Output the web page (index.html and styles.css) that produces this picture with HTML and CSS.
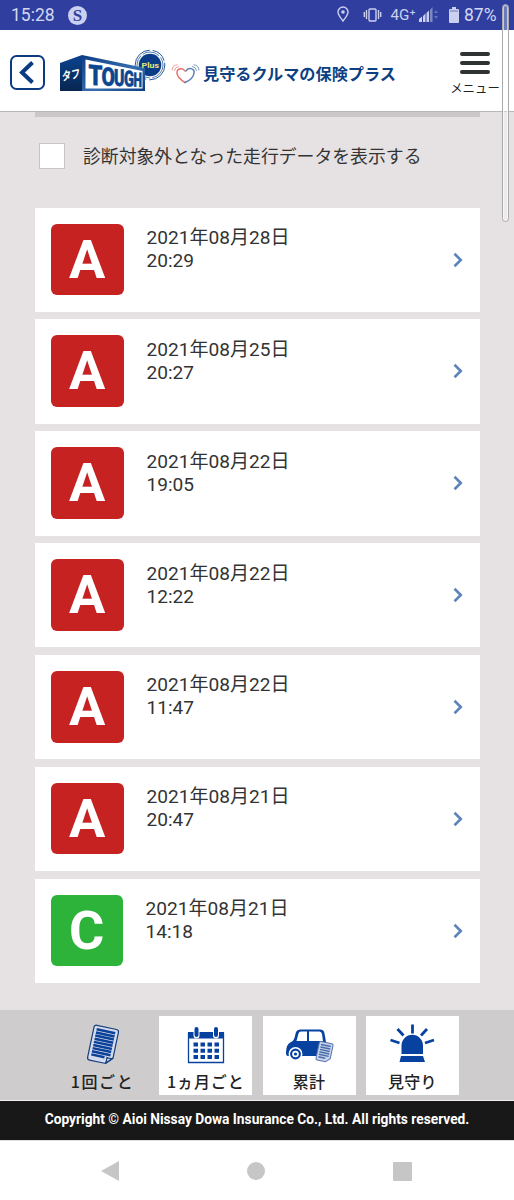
FILE: index.html
```html
<!DOCTYPE html>
<html lang="ja">
<head>
  <meta charset="UTF-8">
  <meta name="viewport" content="width=device-width, initial-scale=1.0">
  <title>見守るクルマの保険プラス</title>
  <link rel="stylesheet" href="styles.css">
</head>
<body>
  <div class="status-bar">
    <span class="clock">15:28</span>
    <span class="s-badge">S</span>
    <svg class="status-icons" width="104" height="30" viewBox="0 0 104 30">
      <g fill="none" stroke="#cbd0f0" stroke-width="1.4">
        <path d="M7 21C4 17 2 15 2 12a5 5 0 0 1 10 0c0 3-2 5-5 9z"/>
        <rect x="33" y="9" width="7" height="12" rx="1"/>
        <path d="M30.500 10v9M28.300 12v5M42.500 10v9M44.700 12v5"/>
      </g>
      <circle cx="7" cy="12" r="1.800" fill="#cbd0f0"/>
      <text x="54.500" y="19.500" textLength="25" lengthAdjust="spacingAndGlyphs">4G⁺</text>
      <g fill="#cbd0f0">
        <path d="M83 22v-3l3-2.500V22zM87 22v-6l2.500-2.500V22z"/>
        <path d="M90.500 22v-9l2.500-2.500V22z"/>
        <path d="M94 22V10l2.500-3v15z" opacity=".5"/>
        <path d="M98 13l2-3 2 3zM98 16l2 3 2-3z" opacity=".35"/>
      </g>
    </svg>
    <svg class="battery" width="10" height="16" viewBox="0 0 10 16">
      <path d="M3 0h4v2h2q1 0 1 1v12q0 1-1 1H1q-1 0-1-1V3q0-1 1-1h2z" fill="#cbd0f0"/>
      <path d="M1 4h8" stroke="#303f9f" stroke-width="1" opacity=".6"/>
    </svg>
    <span class="percent">87%</span>
  </div>

  <header class="header">
    <a class="back" href="#">
      <svg width="35" height="35" viewBox="0 0 35 35">
        <rect x="1" y="1" width="33" height="33" rx="5.500" fill="#fff" stroke="#0d3b82" stroke-width="2"/>
        <path d="M22.500 7.500L12 17.500 22.500 27.500" fill="none" stroke="#0d3b82" stroke-width="4"/>
      </svg>
    </a>
    <svg class="logo" width="110" height="46" viewBox="0 0 110 46">
      <defs>
        <linearGradient id="side" x1="0" y1="0" x2="0" y2="1">
          <stop offset="0" stop-color="#0b4391"/>
          <stop offset="1" stop-color="#08264f"/>
        </linearGradient>
        <linearGradient id="front" x1="0" y1="0" x2="1" y2="1">
          <stop offset="0" stop-color="#0d3d85"/>
          <stop offset=".6" stop-color="#356eb0"/>
          <stop offset="1" stop-color="#0b3a80"/>
        </linearGradient>
      </defs>
      <g fill="none" stroke="#0d4690">
        <circle cx="92" cy="17" r="14.800" stroke-width=".9" stroke-dasharray="24 3 16 2"/>
        <circle cx="92" cy="17" r="13" stroke-width=".7" stroke-dasharray="18 2 31 2"/>
      </g>
      <circle cx="92" cy="17" r="11.300" fill="#0b3d87"/>
      <path d="M2 15L24 7v36H2z" fill="url(#side)"/>
      <path d="M24 7l63 13v23H24z" fill="url(#front)"/>
      <path d="M27.500 11.500l57 11.500v17.500h-57z" fill="#fff"/>
      <text class="logo-kana" transform="matrix(1 -.2 0 1 4 33)" textLength="18" lengthAdjust="spacingAndGlyphs">タフ</text>
      <g class="logo-word">
        <text transform="matrix(1 .08 0 1 30.500 36.500)" font-size="28" textLength="14" lengthAdjust="spacingAndGlyphs">T</text>
        <text transform="matrix(1 .06 0 1 43.500 37.200)" font-size="25.500" textLength="13.500" lengthAdjust="spacingAndGlyphs">O</text>
        <text transform="matrix(1 .03 0 1 56 37.800)" font-size="23.500" textLength="10.500" lengthAdjust="spacingAndGlyphs">U</text>
        <text transform="matrix(1 .03 0 1 66 38.300)" font-size="22" textLength="10" lengthAdjust="spacingAndGlyphs">G</text>
        <text transform="matrix(1 .03 0 1 75.500 38.700)" font-size="20" textLength="8.500" lengthAdjust="spacingAndGlyphs">H</text>
      </g>
      <text class="logo-plus" x="83.500" y="19.500" textLength="17.500" lengthAdjust="spacingAndGlyphs">Plus</text>
    </svg>
    <svg class="heart" width="29" height="20" viewBox="0 0 29 20">
      <g fill="none" stroke-linecap="round">
        <path d="M14 7C12 3.500 6 4 6 9c0 4 4 7 8 9.500" stroke="#e8706c" stroke-width="1.500"/>
        <path d="M15 7c2-4 9-3 8 2-.5 4-4 7.500-9 9.500" stroke="#5c7fb8" stroke-width="1.500"/>
        <path d="M3.500 6.500Q4 3 7.500 2.500M1 6Q1.500 1 6 .8" stroke="#eda09c" stroke-width="1"/>
        <path d="M25.500 6.500Q25 3 21.500 2.500M28 6Q27.500 1 23 .8" stroke="#7f9ac5" stroke-width="1"/>
      </g>
    </svg>
    <span class="site-name">見守るクルマの保険プラス</span>
    <div class="menu">
      <div class="bars"><i></i><i></i><i></i></div>
      <span>メニュー</span>
    </div>
  </header>

  <main class="content">
    <div class="divider"></div>
    <label class="filter">
      <span class="checkbox"></span>
      診断対象外となった走行データを表示する
    </label>

    <div class="trips">
      <a class="trip" href="#">
        <span class="grade">A</span>
        <span class="date">2021年08月28日<br>20:29</span>
        <svg class="arrow" viewBox="0 0 10 16"><path d="M1.500 1.800L7.800 8l-6.300 6.200"/></svg>
      </a>
      <a class="trip" href="#">
        <span class="grade">A</span>
        <span class="date">2021年08月25日<br>20:27</span>
        <svg class="arrow" viewBox="0 0 10 16"><path d="M1.500 1.800L7.800 8l-6.300 6.200"/></svg>
      </a>
      <a class="trip" href="#">
        <span class="grade">A</span>
        <span class="date">2021年08月22日<br>19:05</span>
        <svg class="arrow" viewBox="0 0 10 16"><path d="M1.500 1.800L7.800 8l-6.300 6.200"/></svg>
      </a>
      <a class="trip" href="#">
        <span class="grade">A</span>
        <span class="date">2021年08月22日<br>12:22</span>
        <svg class="arrow" viewBox="0 0 10 16"><path d="M1.500 1.800L7.800 8l-6.300 6.200"/></svg>
      </a>
      <a class="trip" href="#">
        <span class="grade">A</span>
        <span class="date">2021年08月22日<br>11:47</span>
        <svg class="arrow" viewBox="0 0 10 16"><path d="M1.500 1.800L7.800 8l-6.300 6.200"/></svg>
      </a>
      <a class="trip" href="#">
        <span class="grade">A</span>
        <span class="date">2021年08月21日<br>20:47</span>
        <svg class="arrow" viewBox="0 0 10 16"><path d="M1.500 1.800L7.800 8l-6.300 6.200"/></svg>
      </a>
      <a class="trip" href="#">
        <span class="grade grade-c">C</span>
        <span class="date">2021年08月21日<br>14:18</span>
        <svg class="arrow" viewBox="0 0 10 16"><path d="M1.500 1.800L7.800 8l-6.300 6.200"/></svg>
      </a>
    </div>
  </main>

  <nav class="tabs">
    <a class="tab active" href="#">
      <svg width="50" height="42" viewBox="0 0 50 42">
        <g transform="rotate(12 25 21)">
          <path d="M15 3h20q2.500 0 2.500 2.500V32L31.500 38.500H15q-2.500 0-2.500-2.500V5.500Q12.500 3 15 3z" fill="#d5dbea" stroke="#16407f" stroke-width="1.200"/>
          <path d="M15.500 7h19M15.500 10.200h19M15.500 13.400h19M15.500 16.600h19M15.500 19.800h19M15.500 23h19M15.500 26.200h19M15.500 29.400h19M15.500 32.600h13.500" stroke="#0b4199" stroke-width="2.500"/>
          <path d="M31 38.500q1-2 .5-6 3 1 6-.5z" fill="#d5dbea" stroke="#16407f" stroke-width="1.200"/>
        </g>
      </svg>
      <span>1回ごと</span>
    </a>
    <a class="tab" href="#">
      <svg width="50" height="42" viewBox="0 0 50 42">
        <path d="M7.500 9.500h35v29h-35z" fill="#fff" stroke="#0842a0" stroke-width="1.300"/>
        <path d="M7 8h36v6.500H7z" fill="#0842a0"/>
        <path d="M15.500 5v6.500M35 5v6.500" stroke="#fff" stroke-width="6" stroke-linecap="round"/>
        <path d="M15.500 5v6M35 5v6" stroke="#0842a0" stroke-width="4" stroke-linecap="round"/>
        <path d="M12.500 20.500h26M12.500 26.800h26M12.500 33h26" stroke="#0842a0" stroke-width="4" stroke-dasharray="4.500 2.500"/>
      </svg>
      <span class="wide">1ヵ月ごと</span>
    </a>
    <a class="tab" href="#">
      <svg width="50" height="42" viewBox="0 0 50 42">
        <path d="M12 8q1-2.500 4-2.500h20q4 0 4.500 4L42 18v14H4q-2 0-2-3 0-9 5-11 3-1 4-6z" fill="#0842a0"/>
        <path d="M12.500 17l2-7.500Q15 7.500 17 7.500h6V17zM25 7.500h10.500q2 0 2.500 2.500l1 7H25z" fill="#fff"/>
        <circle cx="11.500" cy="30" r="6.200" fill="#0842a0" stroke="#fff" stroke-width="1.500"/>
        <circle cx="11.500" cy="30" r="3.300" fill="#fff"/>
        <circle cx="11.500" cy="30" r="1.600" fill="#0842a0"/>
        <g transform="rotate(12 41 28)">
          <path d="M35 18.500h11q1.500 0 1.500 1.500V33.500l-4 4H35q-1.500 0-1.500-1.500V20q0-1.500 1.500-1.500z" fill="#c9d4e8" stroke="#5473b0"/>
          <path d="M35.500 21.500h10M35.500 24h10M35.500 26.500h10M35.500 29h10M35.500 31.500h10M35.500 34h7" stroke="#496bab" stroke-width="1.500"/>
        </g>
      </svg>
      <span class="tight">累計</span>
    </a>
    <a class="tab" href="#">
      <svg width="50" height="42" viewBox="0 0 50 42">
        <path d="M14.500 30V21.500a10.500 10.500 0 0 1 21.500 0V30zM14 32h22l2 6H12.500z" fill="#0842a0"/>
        <path d="M25.500 0.500v9M10.500 5l6 6.500M40 5l-6 6.500M3.500 16l9 3M47 16l-9 3" stroke="#0842a0" stroke-width="2.800"/>
      </svg>
      <span class="tight">見守り</span>
    </a>
  </nav>

  <footer class="footer">Copyright © Aioi Nissay Dowa Insurance Co., Ltd. All rights reserved.</footer>

  <div class="android-nav">
    <svg width="18" height="20" viewBox="0 0 18 20"><path d="M18 0v20L0 10z"/></svg>
    <svg width="18" height="18" viewBox="0 0 18 18"><circle cx="9" cy="9" r="9"/></svg>
    <svg width="19" height="19" viewBox="0 0 19 19"><rect width="19" height="19" rx="1"/></svg>
  </div>

  <div class="scrollbar"></div>
</body>
</html>
```
FILE: styles.css
```css
* {
  box-sizing: border-box;
}

body {
  margin: 0;
  height: 1200px;
  display: flex;
  flex-direction: column;
  position: relative;
  overflow: hidden;
  background: #e6e2e3;
  color: #333;
  font-family: Roboto, "Noto Sans CJK JP", sans-serif;
}

svg {
  display: block;
  flex: none;
}

a {
  color: inherit;
  text-decoration: none;
}

.status-bar {
  display: flex;
  align-items: center;
  height: 30px;
  padding: 0 17px 0 11px;
  background: #303f9f;
  color: #d3d7f2;
  font-size: 17.5px;
}

.clock {
  width: 57px;
}

.s-badge {
  width: 19px;
  height: 19px;
  border-radius: 50%;
  background: #cbd0f0;
  color: #303f9f;
  font: bold 17px/19px "Liberation Serif", serif;
  text-align: center;
}

.status-icons {
  margin-left: auto;
  margin-right: 9px;
  fill: #cbd0f0;
  font-size: 14px;
}

.battery {
  margin-right: 5px;
}

.percent {
  width: 33px;
}

.header {
  display: flex;
  align-items: center;
  height: 82px;
  padding: 0 14px 0 10px;
  background: #fff;
  border-bottom: 1px solid #b9b6b7;
}

.back {
  margin-top: 4px;
}

.logo {
  margin: 1px 0 0 13px;
}

.logo-kana {
  fill: #fff;
  font-size: 12px;
  font-weight: bold;
}

.logo-word {
  fill: #0d4690;
  stroke: #0d4690;
  stroke-width: 0.5px;
  font-family: Roboto, sans-serif;
  font-weight: 900;
}

.logo-plus {
  fill: #e9e477;
  font-size: 8px;
  font-weight: bold;
}

.heart {
  margin: 6px 0 0 3px;
}

.site-name {
  margin: 5px 0 0 3px;
  color: #0d3f83;
  font-size: 16.15px;
  font-weight: bold;
  white-space: nowrap;
}

.menu {
  margin: 8px 0 0 auto;
  display: flex;
  flex-direction: column;
  align-items: center;
  width: 50px;
  color: #222;
  font-size: 12.4px;
  line-height: 18px;
  white-space: nowrap;
}

.bars {
  display: flex;
  flex-direction: column;
  gap: 5px;
  margin-bottom: 6px;
}

.bars i {
  width: 30px;
  height: 4px;
  border-radius: 2px;
  background: #303333;
}

.content {
  height: 898px;
  padding: 0 34px 0 35px;
}

.divider {
  height: 5px;
  background: #cac7c8;
}

.filter {
  display: flex;
  align-items: center;
  gap: 18px;
  height: 90.5px;
  padding: 0 0 15px 4px;
  font-size: 17.85px;
  white-space: nowrap;
}

.checkbox {
  width: 26px;
  height: 26px;
  margin-top: 2px;
  background: #fff;
  border: 1px solid #c9c5c6;
}

.trips {
  display: flex;
  flex-direction: column;
  gap: 7.6px;
}

.trip {
  display: flex;
  height: 104.3px;
  padding: 16px 17px 16px 16px;
  background: #fff;
}

.grade {
  width: 72.5px;
  height: 71.5px;
  border-radius: 6px;
  background: #c62222;
  color: #fff;
  font-size: 54px;
  font-weight: bold;
  line-height: 71px;
  text-align: center;
}

.grade-c {
  width: 71.5px;
  background: #2eb33a;
}

.date {
  margin: 2.4px 0 0 23px;
  font-size: 19.1px;
  line-height: 23px;
}

.arrow {
  width: 10px;
  height: 16px;
  margin: 28px 0 0 auto;
  fill: none;
  stroke: #5c83bb;
  stroke-width: 2.6;
}

.tabs {
  display: flex;
  gap: 10.3px;
  height: 91px;
  padding: 5.500px 0 0 56px;
  background: #cecccd;
  border-bottom: 1px solid #eee;
}

.tab {
  display: flex;
  flex-direction: column;
  align-items: center;
  width: 93px;
  height: 79.5px;
  padding-top: 8.5px;
  background: #fff;
  color: #222;
  font-family: "Noto Sans CJK JP", sans-serif;
  font-size: 16px;
  font-weight: 500;
  line-height: 20px;
  letter-spacing: 1.6px;
  white-space: nowrap;
}

.tab span {
  margin-top: 4.5px;
}

.tab .wide {
  letter-spacing: 0.9px;
}

.tab .tight {
  letter-spacing: 0.3px;
}

.active {
  background: none;
}

.footer {
  height: 39px;
  background: #181818;
  color: #fff;
  font-size: 13.75px;
  font-weight: bold;
  line-height: 37px;
  text-align: center;
  white-space: nowrap;
}

.android-nav {
  display: flex;
  align-items: center;
  justify-content: space-between;
  height: 60px;
  padding: 1px 102px 0 101px;
  background: #fff;
  border-top: 1px solid #ddd;
  fill: #c6c6c6;
}

/* overlay scrollbar on the right edge */
.scrollbar {
  position: absolute;
  top: 4px;
  right: 5px;
  width: 7px;
  height: 218px;
  border: 1px solid #aaa;
  border-radius: 4px;
  background: rgba(255, 255, 255, 0.3);
  box-shadow: inset 0 0 0 1px rgba(255, 255, 255, 0.6);
}
```
